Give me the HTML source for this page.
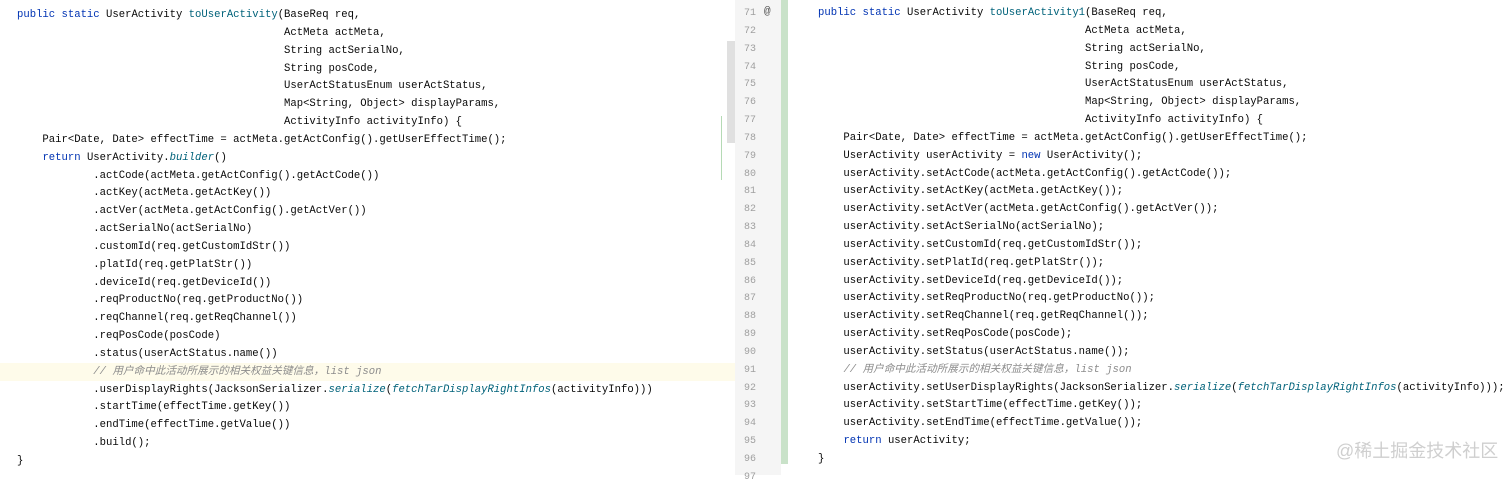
<!DOCTYPE html><html><head><style>
body{margin:0;width:1512px;height:475px;background:#fff;position:relative;overflow:hidden;font-family:"Liberation Mono",monospace;font-size:10.6px;color:#080808}
.l{position:absolute;white-space:pre;line-height:17.84px;height:17.84px}
.k{color:#0033b3}.m{color:#00627a}.i{color:#00627a;font-style:italic}.c{color:#8c8c8c;font-style:italic;font-family:"Liberation Mono","Noto Sans CJK SC",monospace}
.n{position:absolute;left:735px;width:36px;text-align:right;color:#a0a0a0;font-size:10px;line-height:17.84px}
</style></head><body>
<div style="position:absolute;left:0;top:363px;width:735px;height:18px;background:#fefbea"></div>
<div style="position:absolute;left:727px;top:41px;width:8px;height:102px;background:#e0e0e0"></div>
<div style="position:absolute;left:721px;top:116px;width:1px;height:64px;background:#b5dab5"></div>
<div style="position:absolute;left:735px;top:0;width:46px;height:475px;background:#f5f5f5"></div>
<div style="position:absolute;left:781px;top:0;width:7px;height:464px;background:#c9e2c9"></div>
<div style="position:absolute;left:764px;top:6px;color:#555;font-size:11px">@</div>
<div id="L"></div>
<div style="position:absolute;left:1336px;top:437px;font-family:'Liberation Sans','Noto Sans CJK SC',sans-serif;font-size:18px;color:#cfcfcf">@稀土掘金技术社区</div>
<script>
var L=[
'<span class="k">public static</span> UserActivity <span class="m">toUserActivity</span>(BaseReq req,',
'                                          ActMeta actMeta,',
'                                          String actSerialNo,',
'                                          String posCode,',
'                                          UserActStatusEnum userActStatus,',
'                                          Map&lt;String, Object&gt; displayParams,',
'                                          ActivityInfo activityInfo) {',
'    Pair&lt;Date, Date&gt; effectTime = actMeta.getActConfig().getUserEffectTime();',
'    <span class="k">return</span> UserActivity.<span class="i">builder</span>()',
'            .actCode(actMeta.getActConfig().getActCode())',
'            .actKey(actMeta.getActKey())',
'            .actVer(actMeta.getActConfig().getActVer())',
'            .actSerialNo(actSerialNo)',
'            .customId(req.getCustomIdStr())',
'            .platId(req.getPlatStr())',
'            .deviceId(req.getDeviceId())',
'            .reqProductNo(req.getProductNo())',
'            .reqChannel(req.getReqChannel())',
'            .reqPosCode(posCode)',
'            .status(userActStatus.name())',
'            <span class="c">// 用户命中此活动所展示的相关权益关键信息，list json</span>',
'            .userDisplayRights(JacksonSerializer.<span class="i">serialize</span>(<span class="i">fetchTarDisplayRightInfos</span>(activityInfo)))',
'            .startTime(effectTime.getKey())',
'            .endTime(effectTime.getValue())',
'            .build();',
'}'];
var R=[
'<span class="k">public static</span> UserActivity <span class="m">toUserActivity1</span>(BaseReq req,',
'                                          ActMeta actMeta,',
'                                          String actSerialNo,',
'                                          String posCode,',
'                                          UserActStatusEnum userActStatus,',
'                                          Map&lt;String, Object&gt; displayParams,',
'                                          ActivityInfo activityInfo) {',
'    Pair&lt;Date, Date&gt; effectTime = actMeta.getActConfig().getUserEffectTime();',
'    UserActivity userActivity = <span class="k">new</span> UserActivity();',
'    userActivity.setActCode(actMeta.getActConfig().getActCode());',
'    userActivity.setActKey(actMeta.getActKey());',
'    userActivity.setActVer(actMeta.getActConfig().getActVer());',
'    userActivity.setActSerialNo(actSerialNo);',
'    userActivity.setCustomId(req.getCustomIdStr());',
'    userActivity.setPlatId(req.getPlatStr());',
'    userActivity.setDeviceId(req.getDeviceId());',
'    userActivity.setReqProductNo(req.getProductNo());',
'    userActivity.setReqChannel(req.getReqChannel());',
'    userActivity.setReqPosCode(posCode);',
'    userActivity.setStatus(userActStatus.name());',
'    <span class="c">// 用户命中此活动所展示的相关权益关键信息，list json</span>',
'    userActivity.setUserDisplayRights(JacksonSerializer.<span class="i">serialize</span>(<span class="i">fetchTarDisplayRightInfos</span>(activityInfo)));',
'    userActivity.setStartTime(effectTime.getKey());',
'    userActivity.setEndTime(effectTime.getValue());',
'    <span class="k">return</span> userActivity;',
'}'];
var h='';
L.forEach(function(s,j){h+='<div class="l" style="left:17px;top:'+(7+j*17.84)+'px">'+s+'</div>';});
R.forEach(function(s,j){h+='<div class="l" style="left:818px;top:'+(5+j*17.84)+'px">'+s+'</div>';h+='<div class="n" style="top:'+(5+j*17.84)+'px;left:720px">'+(71+j)+'</div>';});
h+='<div class="n" style="top:'+(5+26*17.84)+'px;left:720px">97</div>';
document.getElementById('L').innerHTML=h;
</script>
</body></html>
